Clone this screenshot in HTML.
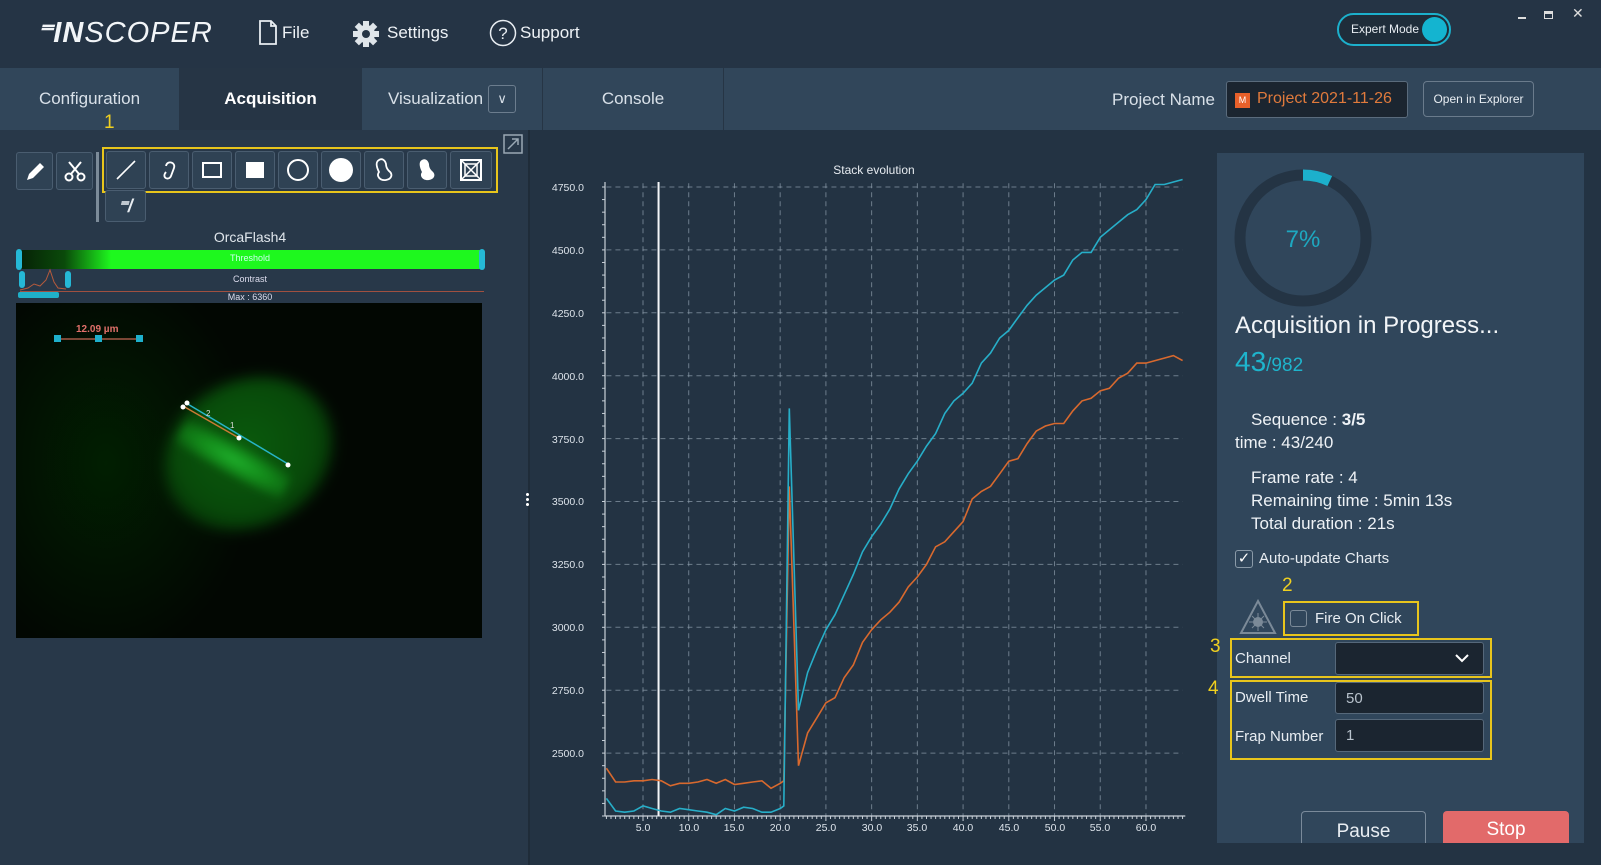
<!DOCTYPE html>
<html><head><meta charset="utf-8">
<style>
*{margin:0;padding:0;box-sizing:border-box}
body{width:1601px;height:865px;overflow:hidden;background:#1f2c39;font-family:"Liberation Sans",sans-serif;color:#e8edf2;position:relative}
.a{position:absolute}
.top{left:0;top:0;width:1601px;height:68px;background:#253445}
.tabs{left:0;top:68px;width:1601px;height:62px;background:#263545}
.tab{top:68px;height:62px;background:#31465a;color:#d8e0e8;font-size:17px;display:flex;align-items:center;justify-content:center}
.left{left:0;top:130px;width:528px;height:735px;background:#283849}
.chart{left:530px;top:130px;width:1071px;height:735px;background:#233343}
.card{left:1217px;top:153px;width:367px;height:690px;background:#30465b}
.btn{width:37px;height:38px;background:#2f4254;border:1px solid #4a5d70;border-radius:3px;display:flex;align-items:center;justify-content:center}
.yl{border:2px solid #e8c51c}
.ylt{color:#f0d020;font-size:19px}
.inp{background:#1b2530;border:1px solid #56687a;border-radius:3px;color:#b8c2cc;font-size:15px;padding-left:10px;display:flex;align-items:center}
.txt{font-size:17px;color:#eef2f6;white-space:nowrap}
</style></head><body>
<div class="a top"></div>
<div class="a" style="left:37px;top:15px;font-size:29px;font-style:italic;letter-spacing:1px;color:#f2f5f8"><b>⁼IN</b>SCOPER</div>
<svg class="a" style="left:258px;top:20px" width="20" height="26" viewBox="0 0 20 26"><path d="M2 1h11l5 5v18H2z M13 1v5h5" fill="none" stroke="#e8edf2" stroke-width="1.8"/></svg>
<div class="a txt" style="left:282px;top:23px">File</div>
<svg class="a" style="left:352px;top:20px" width="28" height="28" viewBox="0 0 28 28"><g fill="#dfe5ea"><circle cx="14" cy="14" r="9"/><rect x="11" y="1" width="6" height="26"/><rect x="1" y="11" width="26" height="6"/><rect x="11" y="1" width="6" height="26" transform="rotate(45 14 14)"/><rect x="11" y="1" width="6" height="26" transform="rotate(-45 14 14)"/></g><circle cx="14" cy="14" r="4" fill="#253445"/></svg>
<div class="a txt" style="left:387px;top:23px">Settings</div>
<svg class="a" style="left:489px;top:19px" width="28" height="28"><circle cx="14" cy="14" r="12.5" fill="none" stroke="#e8edf2" stroke-width="1.5"/><text x="14" y="20" text-anchor="middle" font-size="17" fill="#e8edf2" font-family="Liberation Sans">?</text></svg>
<div class="a txt" style="left:520px;top:23px">Support</div>
<div class="a" style="left:1337px;top:13px;width:114px;height:33px;border:2px solid #1cb0cc;border-radius:17px;background:#1f2d3a"></div>
<div class="a" style="left:1351px;top:22px;font-size:12px;color:#e8edf2">Expert Mode</div>
<div class="a" style="left:1422px;top:17px;width:25px;height:25px;border-radius:50%;background:#14b4d0"></div>
<div class="a" style="left:1518px;top:17px;width:8px;height:2px;background:#ddd"></div>
<div class="a" style="left:1544px;top:11px;width:9px;height:8px;border:1.5px solid #ddd;border-top-width:3px"></div>
<div class="a" style="left:1572px;top:5px;font-size:14px;color:#ddd">✕</div>

<div class="a tabs"></div>
<div class="a tab" style="left:0;width:179px">Configuration</div>
<div class="a tab" style="left:180px;width:181px;background:#263545;font-weight:bold;color:#fff">Acquisition</div>
<div class="a tab" style="left:362px;width:180px;justify-content:flex-start;padding-left:26px">Visualization<span style="margin-left:5px;width:28px;height:28px;border:1px solid #6c7d8e;border-radius:3px;display:inline-flex;align-items:center;justify-content:center;font-size:13px">∨</span></div>
<div class="a tab" style="left:543px;width:180px">Console</div>
<div class="a tab" style="left:724px;width:877px"></div>
<div class="a txt" style="left:1112px;top:90px;color:#d8e0e8">Project Name</div>
<div class="a" style="left:1226px;top:81px;width:182px;height:37px;background:#1b2530;border:1px solid #5a6b7c;border-radius:3px"></div>
<div class="a" style="left:1235px;top:93px;width:15px;height:15px;background:#e8602a;color:#fff;font-size:9px;text-align:center;line-height:15px">M</div>
<div class="a" style="left:1257px;top:90px;font-size:16px;color:#e07a3c">Project 2021-11-26</div>
<div class="a" style="left:1423px;top:81px;width:111px;height:36px;border:1px solid #6a7b8c;border-radius:4px;font-size:12px;display:flex;align-items:center;justify-content:center">Open in Explorer</div>

<div class="a left"></div>
<div class="a ylt" style="left:104px;top:112px">1</div>
<div class="a btn" style="left:16px;top:152px"><svg width="24" height="24"><path d="M4 21l2-6 11-11 4 4-11 11z" fill="#fff"/></svg></div>
<div class="a btn" style="left:56px;top:152px"><svg width="24" height="24"><circle cx="6" cy="18" r="3.5" fill="none" stroke="#fff" stroke-width="2"/><circle cx="18" cy="18" r="3.5" fill="none" stroke="#fff" stroke-width="2"/><path d="M8 15L18 3M16 15L6 3" stroke="#fff" stroke-width="2"/></svg></div>
<div class="a" style="left:96px;top:152px;width:3px;height:70px;background:#7c8b99"></div>
<div class="a yl" style="left:102px;top:147px;width:396px;height:46px"></div>
<div class="a btn" style="left:106px;top:151px;width:40px"><svg width="24" height="24"><path d="M3 21L21 3" stroke="#fff" stroke-width="1.6"/></svg></div>
<div class="a btn" style="left:149px;top:151px;width:40px"><svg width="24" height="24"><path d="M9 14c-5 6 3 9 5 4l3-8c2-6-7-8-8-2" fill="none" stroke="#fff" stroke-width="1.8"/></svg></div>
<div class="a btn" style="left:192px;top:151px;width:40px"><div style="width:20px;height:16px;border:2px solid #fff"></div></div>
<div class="a btn" style="left:235px;top:151px;width:40px"><div style="width:18px;height:16px;background:#fff"></div></div>
<div class="a btn" style="left:278px;top:151px;width:40px"><div style="width:22px;height:22px;border:2px solid #fff;border-radius:50%"></div></div>
<div class="a btn" style="left:321px;top:151px;width:40px"><div style="width:24px;height:24px;background:#fff;border-radius:50%"></div></div>
<div class="a btn" style="left:364px;top:151px;width:40px"><svg width="24" height="26"><path d="M7 3c-4 2-2 8 0 12-3 4 1 9 7 8 6-1 7-6 3-9-2-2-3-4-3-7-1-4-4-6-7-4z" fill="none" stroke="#fff" stroke-width="1.8"/></svg></div>
<div class="a btn" style="left:407px;top:151px;width:40px"><svg width="24" height="26"><path d="M7 3c-4 2-2 8 0 12-3 4 1 9 7 8 6-1 7-6 3-9-2-2-3-4-3-7-1-4-4-6-7-4z" fill="#fff"/></svg></div>
<div class="a btn" style="left:450px;top:151px;width:42px"><svg width="24" height="24"><rect x="2" y="2" width="20" height="20" fill="none" stroke="#fff" stroke-width="2"/><rect x="6" y="6" width="12" height="12" fill="none" stroke="#fff" stroke-width="1.5"/><path d="M2 2l20 20M22 2L2 22" stroke="#fff" stroke-width="1.5"/></svg></div>
<div class="a btn" style="left:105px;top:190px;width:41px;height:32px;font-size:18px;font-weight:bold;font-style:italic">⁼/</div>
<svg class="a" style="left:503px;top:134px" width="20" height="20"><rect x="1" y="1" width="18" height="18" fill="none" stroke="#9aa8b4" stroke-width="1.5"/><path d="M5 15L15 5M9 5h6v6" stroke="#9aa8b4" stroke-width="1.5" fill="none"/></svg>
<div class="a" style="left:0;width:500px;top:229px;text-align:center;font-size:14px;color:#e0e6ec">OrcaFlash4</div>
<div class="a" style="left:18px;top:250px;width:466px;height:19px;background:linear-gradient(90deg,#062006 0%,#0a4a0a 10%,#1ef81e 20%,#1ef81e 100%)"></div>
<div class="a" style="left:0;width:500px;top:253px;text-align:center;font-size:9px;color:#cfe">Threshold</div>
<div class="a" style="left:16px;top:249px;width:6px;height:21px;background:#25b8d6;border-radius:3px"></div>
<div class="a" style="left:479px;top:249px;width:6px;height:21px;background:#25b8d6;border-radius:3px"></div>
<div class="a" style="left:0;width:500px;top:274px;text-align:center;font-size:9px;color:#dde">Contrast</div>
<svg class="a" style="left:18px;top:262px" width="50" height="30"><path d="M2 28L10 26 16 22 22 24 28 18 32 8 36 20 40 26 48 27" fill="none" stroke="#b55a3c" stroke-width="1"/></svg>
<div class="a" style="left:20px;top:291px;width:464px;height:1px;background:#a05040"></div>
<div class="a" style="left:19px;top:271px;width:6px;height:17px;background:#25b8d6;border-radius:3px"></div>
<div class="a" style="left:65px;top:271px;width:6px;height:17px;background:#25b8d6;border-radius:3px"></div>
<div class="a" style="left:18px;top:292px;width:41px;height:6px;background:#1fb0c8;border-radius:2px"></div>
<div class="a" style="left:0;width:500px;top:292px;text-align:center;font-size:9px;color:#dde">Max : 6360</div>
<div class="a" style="left:16px;top:303px;width:466px;height:335px;background:#020702;overflow:hidden">
 <div class="a" style="left:-60px;top:-40px;width:300px;height:400px;background:radial-gradient(ellipse at center,rgba(0,60,0,.45),rgba(0,0,0,0) 70%)"></div>
 <div class="a" style="left:145px;top:78px;width:175px;height:145px;transform:rotate(-30deg);border-radius:50%;background:radial-gradient(ellipse at 50% 45%,#0a5a0d 0%,#084a0a 55%,#053206 80%,rgba(0,20,0,0) 100%);filter:blur(7px)"></div>
 <div class="a" style="left:165px;top:112px;width:120px;height:30px;transform:rotate(29deg);transform-origin:left center;background:radial-gradient(ellipse,#1fb02c 0%,#138a1a 45%,rgba(0,80,0,0) 100%);filter:blur(4px)"></div>
 <svg class="a" style="left:0;top:0" width="466" height="335">
  <line x1="167" y1="103" x2="223" y2="135" stroke="#c97a35" stroke-width="1.5"/>
  <line x1="170" y1="100" x2="272" y2="161" stroke="#27b4c6" stroke-width="1.5"/>
  <circle cx="167" cy="104" r="2.5" fill="#fff"/><circle cx="171" cy="100" r="2.5" fill="#fff"/><circle cx="223" cy="135" r="2.5" fill="#fff"/><circle cx="272" cy="162" r="2.5" fill="#fff"/>
  <text x="190" y="113" font-size="8" fill="#ddd">2</text><text x="214" y="125" font-size="8" fill="#ddd">1</text>
  <line x1="42" y1="36" x2="126" y2="36" stroke="#a35a48" stroke-width="1.5"/>
  <rect x="38" y="32" width="7" height="7" fill="#1eb0cc"/><rect x="79" y="32" width="7" height="7" fill="#1eb0cc"/><rect x="120" y="32" width="7" height="7" fill="#1eb0cc"/>
  <text x="60" y="29" font-size="10" font-weight="bold" fill="#e0706a" font-family="Liberation Sans">12.09 µm</text>
 </svg>
</div>
<div class="a" style="left:526px;top:492px;width:3px;height:14px;background:radial-gradient(circle,#fff 1.4px,transparent 1.6px) 0 0/3px 5px"></div>

<div class="a chart"></div>
<svg id="ch" class="a" style="left:530px;top:130px" width="687" height="735" font-family="Liberation Sans">
 <text x="344" y="44" text-anchor="middle" font-size="12" fill="#e6ebf0">Stack evolution</text>
 <g id="grid"></g>
 <g font-size="10.5" fill="#dce3ea" text-anchor="end">
  <text x="54" y="61">4750.0</text><text x="54" y="124">4500.0</text><text x="54" y="187">4250.0</text><text x="54" y="250">4000.0</text><text x="54" y="313">3750.0</text><text x="54" y="375">3500.0</text><text x="54" y="438">3250.0</text><text x="54" y="501">3000.0</text><text x="54" y="564">2750.0</text><text x="54" y="627">2500.0</text>
 </g>
 <g font-size="10.5" fill="#dce3ea" text-anchor="middle">
  <text x="113" y="701">5.0</text><text x="159" y="701">10.0</text><text x="204" y="701">15.0</text><text x="250" y="701">20.0</text><text x="296" y="701">25.0</text><text x="342" y="701">30.0</text><text x="387" y="701">35.0</text><text x="433" y="701">40.0</text><text x="479" y="701">45.0</text><text x="525" y="701">50.0</text><text x="570" y="701">55.0</text><text x="616" y="701">60.0</text>
 </g>
</svg>

<div class="a card"></div>
<svg class="a" style="left:1233px;top:168px" width="140" height="140"><circle cx="70" cy="70" r="63" fill="none" stroke="#243444" stroke-width="11"/><path d="M70 7A63 63 0 0 1 96.8 13" fill="none" stroke="#1cb0cc" stroke-width="11"/><text x="70" y="79" text-anchor="middle" font-size="24" fill="#1ea8c0" font-family="Liberation Sans">7%</text></svg>
<div class="a" style="left:1235px;top:312px;font-size:24px;color:#f2f5f8">Acquisition in Progress...</div>
<div class="a" style="left:1235px;top:346px;color:#1eb4cc"><span style="font-size:28px">43</span><span style="font-size:19px">/982</span></div>
<div class="a txt" style="left:1251px;top:410px">Sequence : <b>3/5</b></div>
<div class="a txt" style="left:1235px;top:433px">time : 43/240</div>
<div class="a txt" style="left:1251px;top:468px">Frame rate : 4</div>
<div class="a txt" style="left:1251px;top:491px">Remaining time : 5min 13s</div>
<div class="a txt" style="left:1251px;top:514px">Total duration : 21s</div>
<div class="a" style="left:1235px;top:550px;width:18px;height:18px;border:1.5px solid #8a9aa8;border-radius:3px;font-size:15px;line-height:15px;text-align:center;color:#fff">✓</div>
<div class="a" style="left:1259px;top:550px;font-size:15px;color:#e8edf2">Auto-update Charts</div>
<div class="a ylt" style="left:1282px;top:575px">2</div>
<svg class="a" style="left:1238px;top:598px" width="40" height="38"><path d="M20 3L37 35H3z" fill="none" stroke="#7b8a98" stroke-width="2"/><circle cx="20" cy="24" r="5" fill="#7b8a98"/><path d="M20 15v18M11 24h18M14 18l12 12M26 18l-12 12" stroke="#7b8a98" stroke-width="1"/></svg>
<div class="a yl" style="left:1283px;top:601px;width:136px;height:35px"></div>
<div class="a" style="left:1290px;top:610px;width:17px;height:17px;border:1.5px solid #7b8a98;border-radius:3px"></div>
<div class="a" style="left:1315px;top:610px;font-size:15px;color:#e8edf2">Fire On Click</div>
<div class="a ylt" style="left:1210px;top:636px">3</div>
<div class="a yl" style="left:1230px;top:638px;width:262px;height:40px"></div>
<div class="a" style="left:1235px;top:650px;font-size:15px">Channel</div>
<div class="a inp" style="left:1335px;top:642px;width:149px;height:33px;justify-content:flex-end;padding-right:14px"><svg width="14" height="9"><path d="M1 1l6 6 6-6" fill="none" stroke="#fff" stroke-width="2"/></svg></div>
<div class="a ylt" style="left:1208px;top:678px">4</div>
<div class="a yl" style="left:1230px;top:680px;width:262px;height:80px"></div>
<div class="a" style="left:1235px;top:689px;font-size:15px">Dwell Time</div>
<div class="a inp" style="left:1335px;top:682px;width:149px;height:32px">50</div>
<div class="a" style="left:1235px;top:728px;font-size:15px">Frap Number</div>
<div class="a inp" style="left:1335px;top:719px;width:149px;height:33px">1</div>
<div class="a" style="left:1301px;top:811px;width:125px;height:32px;border:1px solid #7a8a9a;border-bottom:none;border-radius:4px 4px 0 0;background:#30465b;font-size:19px;text-align:center;padding-top:9px">Pause</div>
<div class="a" style="left:1443px;top:811px;width:126px;height:32px;background:#e26a6a;border-radius:4px 4px 0 0;font-size:19px;text-align:center;padding-top:8px;color:#fff">Stop</div>

<script>
(function(){
var ns="http://www.w3.org/2000/svg",g=document.getElementById('grid'),ch=document.getElementById('ch');
var ox=530,oy=130;
function X(t){return 643+(t-5)*9.145-ox}
function Y(v){return 187+(4750-v)/250*62.9-oy}
function el(n,a,p){var e=document.createElementNS(ns,n);for(var k in a)e.setAttribute(k,a[k]);(p||g).appendChild(e);return e}
for(var v=2500;v<=4750;v+=250)el('line',{x1:X(1),x2:X(64),y1:Y(v),y2:Y(v),stroke:'#8d9cab','stroke-opacity':'.7','stroke-dasharray':'5,4','stroke-width':1});
for(var t=5;t<=60;t+=5)el('line',{x1:X(t),x2:X(t),y1:Y(4765),y2:Y(2250),stroke:'#8d9cab','stroke-opacity':'.7','stroke-dasharray':'5,4','stroke-width':1});
el('line',{x1:75,x2:75,y1:Y(4770),y2:Y(2250),stroke:'#c8d0d8','stroke-width':1.2});
el('line',{x1:75,x2:X(64.3),y1:Y(2250),y2:Y(2250),stroke:'#c8d0d8','stroke-width':1.2});
for(var t=1;t<=64;t+=0.5)el('line',{x1:X(t),x2:X(t),y1:Y(2250),y2:Y(2250)+(t%5==0?5:3),stroke:'#c8d0d8','stroke-width':1});
for(var v=2250;v<=4750;v+=50)el('line',{x1:72,x2:75,y1:Y(v),y2:Y(v),stroke:'#c8d0d8','stroke-width':1});
el('line',{x1:X(6.7),x2:X(6.7),y1:Y(4770),y2:Y(2250),stroke:'#f4f6f8','stroke-width':2});
var o=[2440,2385,2385,2390,2390,2395,2390,2370,2380,2380,2385,2395,2380,2395,2375,2380,2385,2390,2360,2380],
b=[2320,2270,2265,2270,2290,2280,2270,2265,2280,2275,2270,2265,2255,2280,2270,2285,2280,2265,2265,2280];
var o2=[3560,2450,2580,2640,2700,2720,2800,2850,2940,2990,3030,3060,3100,3160,3200,3250,3320,3340,3380,3420,3510,3540,3560,3610,3660,3670,3730,3780,3800,3810,3810,3860,3900,3910,3940,3950,3990,4010,4050,4050,4060,4070,4080,4060],
b2=[3870,2670,2820,2910,2990,3050,3130,3210,3300,3360,3410,3470,3550,3610,3660,3720,3770,3850,3900,3930,3970,4050,4090,4150,4180,4230,4280,4320,4350,4380,4400,4460,4490,4490,4550,4580,4610,4640,4660,4700,4760,4760,4770,4780];
function pts(a,c){var s=[];for(var i=0;i<a.length;i++)s.push(X(i+1).toFixed(1)+','+Y(a[i]).toFixed(1));s.push(X(20.4).toFixed(1)+','+Y(a[19]+10).toFixed(1));for(var i=0;i<c.length;i++){var t=21+i;if(t>64)break;s.push(X(t).toFixed(1)+','+Y(c[i]).toFixed(1))}return s.join(' ')}
el('polyline',{points:pts(o,o2),fill:'none',stroke:'#d8692e','stroke-width':1.6},ch);
el('polyline',{points:pts(b,b2),fill:'none',stroke:'#27aec8','stroke-width':1.6},ch);
})();
</script>
</body></html>
